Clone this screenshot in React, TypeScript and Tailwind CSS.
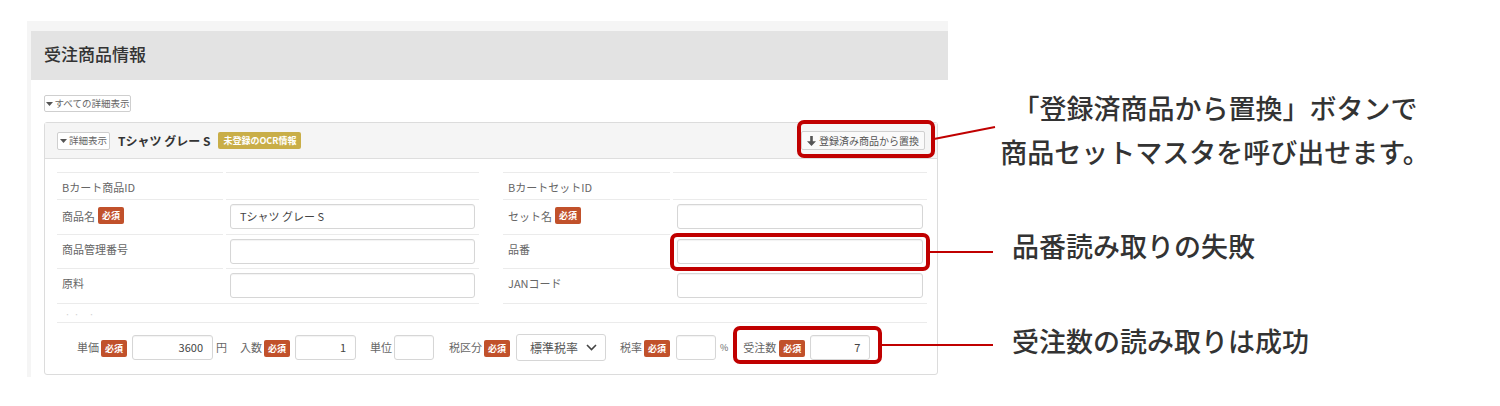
import React from "react";

const jp = "font-['Noto_Sans_CJK_JP','Noto_Sans',sans-serif]";

function Required() {
  return (
    <span className="inline-flex h-[17px] w-[26px] items-center justify-center rounded-[2px] bg-[#c1512b] text-[9px] font-bold leading-none text-white">
      必須
    </span>
  );
}

function Caret() {
  return (
    <svg width="7" height="4" viewBox="0 0 7 4" className="mr-[2px]">
      <path d="M0 0h7L3.5 4z" fill="#555" />
    </svg>
  );
}

function TextInput({ value = "", className = "", align = "left" }: { value?: string; className?: string; align?: "left" | "right" }) {
  return (
    <div
      className={`flex h-[25px] items-center rounded-[3px] border border-[#d6d6d6] bg-white px-[9px] text-[11px] text-[#444] shadow-[inset_0_1px_1px_rgba(0,0,0,0.05)] ${
        align === "right" ? "justify-end" : "justify-start"
      } ${className}`}
    >
      {value}
    </div>
  );
}

type Row = { label: string; req?: boolean; input?: boolean; value?: string; h: string };

function FieldTable({ rows, labelW }: { rows: Row[]; labelW: string }) {
  return (
    <div className="flex flex-col">
      {rows.map((r) => (
        <div key={r.label} className={`flex ${r.h}`}>
          <div className={`${labelW} shrink-0 border-t border-[#ebebeb] pl-[5px] pt-[7px]`}>
            <div className="flex items-center gap-[3px] text-[11px] leading-[14px] text-[#666]">
              {r.label}
              {r.req && <Required />}
            </div>
          </div>
          <div className="ml-[3px] flex-1 border-t border-[#ebebeb] pl-[4px] pr-[4px] pt-[4px]">
            {r.input && <TextInput value={r.value} />}
          </div>
        </div>
      ))}
    </div>
  );
}

const leftRows: Row[] = [
  { label: "Bカート商品ID", h: "h-[27px]" },
  { label: "商品名", req: true, input: true, value: "Tシャツ グレー S", h: "h-[35px]" },
  { label: "商品管理番号", input: true, h: "h-[34px]" },
  { label: "原料", input: true, h: "h-[35px]" },
];

const rightRows: Row[] = [
  { label: "BカートセットID", h: "h-[27px]" },
  { label: "セット名", req: true, input: true, h: "h-[35px]" },
  { label: "品番", input: true, h: "h-[34px]" },
  { label: "JANコード", input: true, h: "h-[35px]" },
];

function Partial({ dots = true }: { dots?: boolean }) {
  return (
    <div className="flex h-[19px] border-t border-[#ebebeb]">
      {dots && <div className="pl-[8px] pt-[6px] text-[9px] leading-none tracking-[4px] text-[#d0d0d0]">·· ·</div>}
    </div>
  );
}

function ArrowDownSolid() {
  return (
    <svg width="9" height="10" viewBox="0 0 9 10" className="mr-[3px]">
      <path d="M3.2 0h2.6v5.2H9L4.5 10 0 5.2h3.2z" fill="#555" />
    </svg>
  );
}

export default function App() {
  return (
    <div className={`relative h-[406px] w-[1500px] overflow-hidden bg-white ${jp}`}>
      <div className="ml-[27px] mt-[21px] h-[356px] w-[921px] bg-[#f5f5f5] pl-[4px] pt-[10px]">
        <div className="flex h-[49px] items-center bg-[#e3e3e3] pb-[4px] pl-[13px] text-[17px] font-medium text-[#333]">受注商品情報</div>
        <div className="h-[297px] bg-white pl-[13px] pr-[10px] pt-[15px]">
          <div className="flex h-[17px] w-[87px] items-center justify-center rounded-[2px] border border-[#cfcfcf] bg-white text-[9.5px] text-[#666]">
            <Caret />
            すべての詳細表示
          </div>

          <div className="mt-[10px] w-[894px] rounded-[3px] border border-[#dcdcdc]">
            <div className="flex h-[36px] items-center border-b border-[#dedede] bg-[#f5f5f5] pl-[12px] pr-[12px]">
              <div className="flex h-[18px] w-[53px] items-center justify-center rounded-[2px] border border-[#cfcfcf] bg-white text-[9.5px] text-[#666]">
                <Caret />
                詳細表示
              </div>
              <div className="ml-[8px] text-[12px] font-bold text-[#333]">Tシャツ グレー S</div>
              <div className="ml-[8px] flex h-[17px] items-center rounded-[2px] bg-[#c9ae48] px-[5px] text-[9px] font-bold text-white">
                未登録のOCR情報
              </div>
              <div className="ml-auto flex h-[19px] items-center rounded-[2px] border border-[#d0d0d0] bg-[#fafafa] px-[5px] text-[10px] text-[#555]">
                <ArrowDownSolid />
                登録済み商品から置換
              </div>
            </div>

            <div className="pb-[13px] pl-[12px] pr-[10px] pt-[13px]">
              <div className="grid grid-cols-[422px_424px] gap-x-[24px]">
                <div>
                  <FieldTable rows={leftRows} labelW="w-[166px]" />
                  <Partial />
                </div>
                <div>
                  <FieldTable rows={rightRows} labelW="w-[167px]" />
                  <Partial dots={false} />
                </div>
              </div>

              <div className="flex items-center border-t border-[#ebebeb] pl-[20px] pt-[11px] text-[11px] text-[#666]">
                <span>単価</span>
                <span className="ml-[2px]"><Required /></span>
                <TextInput value="3600" align="right" className="ml-[5px] w-[81px]" />
                <span className="ml-[3px]">円</span>
                <span className="ml-[13px]">入数</span>
                <span className="ml-[2px]"><Required /></span>
                <TextInput value="1" align="right" className="ml-[5px] w-[61px]" />
                <span className="ml-[14px]">単位</span>
                <TextInput className="ml-[2px] w-[40px]" />
                <span className="ml-[15px]">税区分</span>
                <span className="ml-[2px]"><Required /></span>
                <div className="ml-[6px] flex h-[27px] w-[90px] items-center justify-between rounded-[3px] border border-[#d6d6d6] bg-white pl-[13px] pr-[8px] text-[12px] text-[#555]">
                  標準税率
                  <svg width="11" height="7" viewBox="0 0 11 7">
                    <path d="M1 1l4.5 4.5L10 1" stroke="#444" strokeWidth="1.6" fill="none" />
                  </svg>
                </div>
                <span className="ml-[14px]">税率</span>
                <span className="ml-[2px]"><Required /></span>
                <TextInput className="ml-[6px] w-[40px]" />
                <span className="ml-[4px] text-[9px]">%</span>
                <span className="ml-[15px]">受注数</span>
                <span className="ml-[3px]"><Required /></span>
                <TextInput value="7" align="right" className="ml-[5px] w-[60px]" />
              </div>
            </div>
          </div>
        </div>
      </div>

      {/* annotation layer */}
      <div className="absolute left-[797px] top-[120px] h-[38px] w-[138px] rounded-[7px] border-[4px] border-[#c00000]" />
      <div className="absolute left-[670px] top-[233px] h-[38px] w-[260px] rounded-[7px] border-[4px] border-[#c00000]" />
      <div className="absolute left-[733px] top-[326px] h-[38px] w-[149px] rounded-[7px] border-[4px] border-[#c00000]" />
      <svg className="pointer-events-none absolute left-0 top-0" width="1500" height="406">
        <line x1="934" y1="139" x2="995" y2="127" stroke="#c00000" strokeWidth="2" />
        <line x1="929" y1="252" x2="993" y2="252" stroke="#c00000" strokeWidth="2" />
        <line x1="881" y1="345" x2="993" y2="345" stroke="#c00000" strokeWidth="2" />
      </svg>

      <div className="absolute left-[992px] top-[86px] w-[446px] text-center text-[27px] font-medium leading-[44px] text-[#333]">
        <div>「登録済商品から置換」ボタンで</div>
        <div>商品セットマスタを呼び出せます。</div>
      </div>
      <div className="absolute left-[1012px] top-[231px] text-[27px] font-medium leading-[30px] text-[#333]">品番読み取りの失敗</div>
      <div className="absolute left-[1012px] top-[326px] text-[27px] font-medium leading-[30px] text-[#333]">受注数の読み取りは成功</div>
    </div>
  );
}
